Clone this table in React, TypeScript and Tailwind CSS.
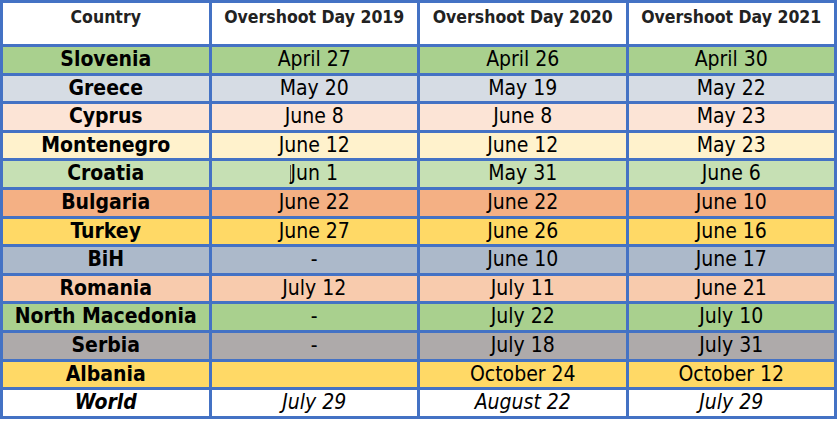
const rows: { country: string; bg: string; d19: string; d20: string; d21: string; italic?: boolean; cursor?: boolean }[] = [
  { country: "Slovenia", bg: "bg-[#a9d08e]", d19: "April 27", d20: "April 26", d21: "April 30" },
  { country: "Greece", bg: "bg-[#d6dce4]", d19: "May 20", d20: "May 19", d21: "May 22" },
  { country: "Cyprus", bg: "bg-[#fce4d6]", d19: "June 8", d20: "June 8", d21: "May 23" },
  { country: "Montenegro", bg: "bg-[#fff2cc]", d19: "June 12", d20: "June 12", d21: "May 23" },
  { country: "Croatia", bg: "bg-[#c6e0b4]", d19: "Jun 1", d20: "May 31", d21: "June 6", cursor: true },
  { country: "Bulgaria", bg: "bg-[#f4b084]", d19: "June 22", d20: "June 22", d21: "June 10" },
  { country: "Turkey", bg: "bg-[#ffd966]", d19: "June 27", d20: "June 26", d21: "June 16" },
  { country: "BiH", bg: "bg-[#acb9ca]", d19: "-", d20: "June 10", d21: "June 17" },
  { country: "Romania", bg: "bg-[#f8cbad]", d19: "July 12", d20: "July 11", d21: "June 21" },
  { country: "North Macedonia", bg: "bg-[#a9d08e]", d19: "-", d20: "July 22", d21: "July 10" },
  { country: "Serbia", bg: "bg-[#aeaaaa]", d19: "-", d20: "July 18", d21: "July 31" },
  { country: "Albania", bg: "bg-[#ffd966]", d19: "", d20: "October 24", d21: "October 12" },
  { country: "World", bg: "bg-white", d19: "July 29", d20: "August 22", d21: "July 29", italic: true },
];

const headers = ["Country", "Overshoot Day 2019", "Overshoot Day 2020", "Overshoot Day 2021"];

export default function App() {
  return (
    <div className="w-[840px] h-[421px] bg-white" style={{ fontFamily: '"DejaVu Sans Condensed", Tahoma, "DejaVu Sans", sans-serif' }}>
      <div className="w-[837px] bg-[#4472c4] p-[3px] grid grid-cols-4 grid-rows-[41px_repeat(13,25.6px)] gap-[3px] text-black">
        {headers.map((h) => (
          <div key={h} className="bg-white flex justify-center pt-[1px] text-[17.5px] font-bold text-[#222]">
            {h}
          </div>
        ))}
        {rows.map((r) => (
          <div key={r.country} className="contents">
            <div className={`${r.bg} flex items-center justify-center text-[21px] font-bold ${r.italic ? "italic" : ""}`}>
              {r.country}
            </div>
            <div className={`${r.bg} flex items-center justify-center text-[21px] ${r.italic ? "italic" : ""}`}>
              {r.cursor && <span className="w-px h-[19px] bg-[#555] mr-[-1px]" />}
              {r.d19}
            </div>
            <div className={`${r.bg} flex items-center justify-center text-[21px] ${r.italic ? "italic" : ""}`}>
              {r.d20}
            </div>
            <div className={`${r.bg} flex items-center justify-center text-[21px] ${r.italic ? "italic" : ""}`}>
              {r.d21}
            </div>
          </div>
        ))}
      </div>
    </div>
  );
}
